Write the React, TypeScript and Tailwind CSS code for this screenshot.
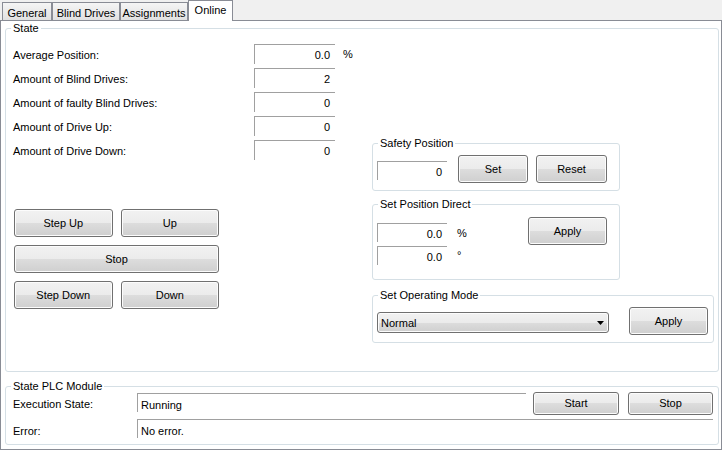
import React from "react";

const btnFace =
  "bg-[linear-gradient(to_bottom,#f2f2f2_0%,#ebebeb_50%,#dddddd_50%,#cfcfcf_100%)] shadow-[inset_0_0_0_1px_#fcfcfc]";

const Btn = ({ label, className = "" }: { label: string; className?: string }) => (
  <button
    type="button"
    className={`flex shrink-0 items-center justify-center rounded-[3px] border border-[#707070] leading-[13px] text-black ${btnFace} ${className}`}
  >
    {label}
  </button>
);

// sunken read-only box (Fixed3D look)
const Box = ({
  value,
  className = "",
  left = false,
}: {
  value: string;
  className?: string;
  left?: boolean;
}) => (
  <div
    className={`shrink-0 border-t border-l border-[#a0a0a0] leading-[13px] ${
      left ? "pl-[3px] pt-[5px] text-left" : "pr-[5px] pt-[4px] text-right"
    } ${className}`}
  >
    {value}
  </div>
);

const Group = ({
  title,
  className = "",
  children,
}: {
  title: string;
  className?: string;
  children: React.ReactNode;
}) => (
  <fieldset className={`rounded-[3px] border border-[#d5dfe5] ${className}`}>
    <legend className="ml-[5px] px-[2px] leading-[13px]">{title}</legend>
    {children}
  </fieldset>
);

const stateRows = [
  { label: "Average Position:", value: "0.0", unit: "%" },
  { label: "Amount of Blind Drives:", value: "2" },
  { label: "Amount of faulty Blind Drives:", value: "0" },
  { label: "Amount of Drive Up:", value: "0" },
  { label: "Amount of Drive Down:", value: "0" },
];

const tabs = [
  { name: "General", w: "w-[50px]" },
  { name: "Blind Drives", w: "w-[68px]" },
  { name: "Assignments", w: "w-[68px]" },
];

export default function App() {
  return (
    <div className="flex h-[450px] w-[722px] flex-col bg-[#f0f0f0] font-['Liberation_Sans',Arial,sans-serif] text-[11px] text-black">
      {/* tab strip */}
      <div className="flex h-[20px] items-end pl-[2px]">
        {tabs.map((t) => (
          <div
            key={t.name}
            className={`flex h-[18px] justify-center border border-b-0 border-[#898c95] bg-gradient-to-b from-[#f5f5f5] to-[#e1e1e1] pt-[4px] leading-[13px] ${t.w}`}
          >
            {t.name}
          </div>
        ))}
        <div className="relative z-10 -mb-px flex h-[21px] w-[45px] justify-center border border-b-0 border-[#898c95] bg-white pt-[3px] leading-[13px]">
          Online
        </div>
      </div>

      {/* tab page */}
      <div className="flex flex-1 flex-col border border-[#898c95] bg-white pl-[4px] pr-[2px] pt-[1px]">
        <Group title="State" className="h-[350px]">
          <div className="flex pl-[7px]">
            {/* left column */}
            <div className="flex w-[359px] flex-col pt-[9px]">
              <div className="flex flex-col gap-[4px]">
                {stateRows.map((r) => (
                  <div key={r.label} className="flex h-[20px] items-start">
                    <span className="w-[241px] pt-[5px] leading-[13px]">{r.label}</span>
                    <Box value={r.value} className="h-[20px] w-[81px]" />
                    {r.unit && <span className="ml-[8px] pt-[4px] leading-[13px]">{r.unit}</span>}
                  </div>
                ))}
              </div>

              <div className="ml-[1px] mt-[49px] grid w-[205px] grid-cols-2 gap-x-[8px] gap-y-[8px]">
                <Btn label="Step Up" className="h-[28px] w-full" />
                <Btn label="Up" className="h-[28px] w-full" />
                <Btn label="Stop" className="col-span-2 h-[28px] w-full" />
                <Btn label="Step Down" className="h-[28px] w-full" />
                <Btn label="Down" className="h-[28px] w-full" />
              </div>
            </div>

            {/* right column */}
            <div className="mt-[102px] flex w-[342px] flex-col">
              <Group title="Safety Position" className="w-[248px]">
                <div className="flex items-start pb-[7px] pl-[4px] pt-[5px]">
                  <Box value="0" className="mt-[6px] h-[19px] w-[70px]" />
                  <Btn label="Set" className="ml-[11px] h-[28px] w-[70px]" />
                  <Btn label="Reset" className="ml-[8px] h-[28px] w-[71px]" />
                </div>
              </Group>

              <Group title="Set Position Direct" className="mt-[7px] w-[248px]">
                <div className="flex items-start pb-[14px] pl-[4px]">
                  <div className="mt-[12px] flex flex-col gap-[4px]">
                    <div className="flex items-start">
                      <Box value="0.0" className="h-[19px] w-[70px]" />
                      <span className="ml-[10px] pt-[4px] leading-[13px]">%</span>
                    </div>
                    <div className="flex items-start">
                      <Box value="0.0" className="h-[19px] w-[70px]" />
                      <span className="ml-[10px] pt-[3px] leading-[13px]">°</span>
                    </div>
                  </div>
                  <Btn label="Apply" className="ml-auto mr-[12px] mt-[6px] h-[28px] w-[79px]" />
                </div>
              </Group>

              <Group title="Set Operating Mode" className="mt-[9px] w-[342px]">
                <div className="flex items-start pb-[7px] pl-[4px]">
                  <div
                    className={`mt-[10px] flex h-[21px] w-[232px] items-center justify-between rounded-[3px] border border-[#707070] pl-[3px] pr-[4px] leading-[13px] ${btnFace}`}
                  >
                    <span className="pt-[1px]">Normal</span>
                    <svg width="7" height="4" viewBox="0 0 7 4">
                      <path d="M0 0h7L3.5 4z" fill="#000" />
                    </svg>
                  </div>
                  <Btn label="Apply" className="ml-auto mr-[5px] mt-[5px] h-[28px] w-[79px]" />
                </div>
              </Group>
            </div>
          </div>
        </Group>

        <Group title="State PLC Module" className="mt-[8px] h-[65px]">
          <div className="-mt-px flex h-[23px] items-start pl-[7px]">
            <span className="mt-[6px] w-[124px] leading-[13px]">Execution State:</span>
            <Box value="Running" left className="mt-[1px] h-[19px] w-[389px]" />
            <Btn label="Start" className="ml-[7px] h-[23px] w-[86px]" />
            <Btn label="Stop" className="ml-[9px] h-[23px] w-[85px]" />
          </div>
          <div className="mt-[4px] flex items-start pl-[7px]">
            <span className="mt-[6px] w-[124px] leading-[13px]">Error:</span>
            <Box value="No error." left className="h-[19px] w-[576px]" />
          </div>
        </Group>
      </div>
    </div>
  );
}
